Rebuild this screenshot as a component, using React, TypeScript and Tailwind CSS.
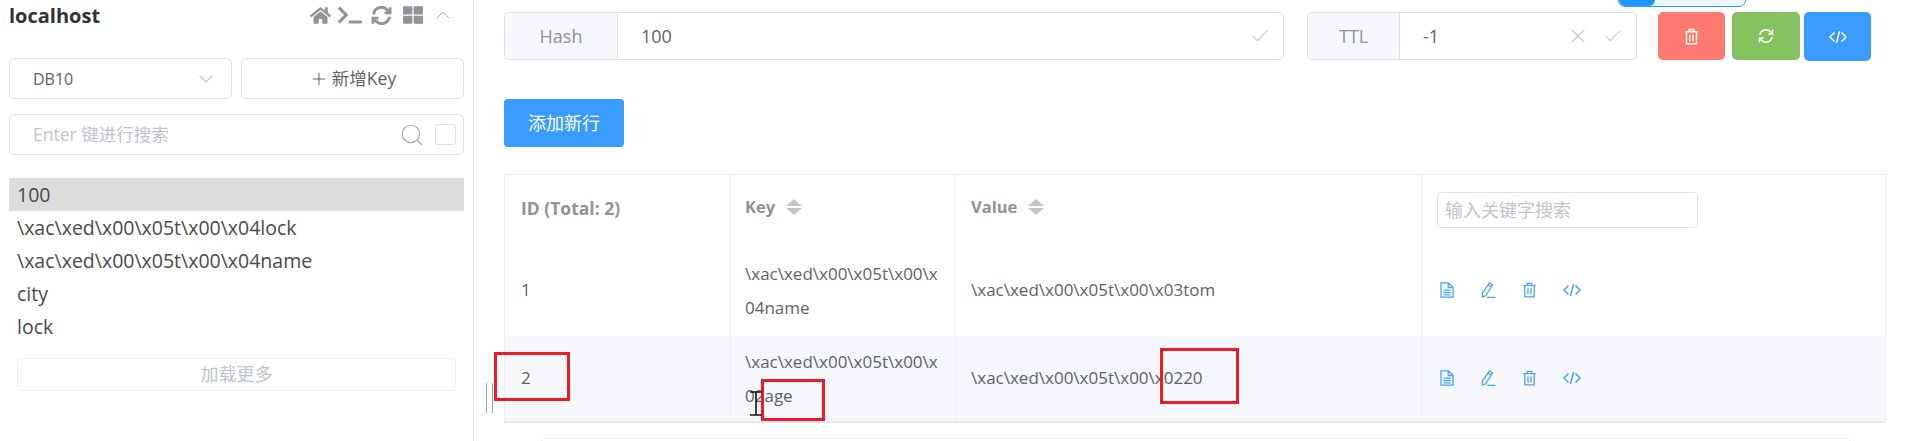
import { Check, ChevronDown, ChevronUp, Plus, Search, X } from 'lucide-react';
import { FaHome, FaTerminal, FaThLarge } from 'react-icons/fa';

const sidebarKeys = [
  '100',
  '\\xac\\xed\\x00\\x05t\\x00\\x04lock',
  '\\xac\\xed\\x00\\x05t\\x00\\x04name',
  'city',
  'lock',
];

const rows = [
  { id: 1, key: '\\xac\\xed\\x00\\x05t\\x00\\x04name', value: '\\xac\\xed\\x00\\x05t\\x00\\x03tom' },
  { id: 2, key: '\\xac\\xed\\x00\\x05t\\x00\\x02age', value: '\\xac\\xed\\x00\\x05t\\x00\\x0220' },
];

type IconProps = { className?: string };

function TrashIcon({ className }: IconProps) {
  return (
    <svg viewBox="0 0 16 18" fill="none" stroke="currentColor" strokeWidth="1.5" className={className}>
      <path d="M1 4h14M5.5 4V1.5h5V4M2.7 4v12.8h10.6V4M6.3 7v7M9.7 7v7" />
    </svg>
  );
}

function CodeIcon({ className }: IconProps) {
  return (
    <svg viewBox="0 0 18 14" fill="none" stroke="currentColor" strokeWidth="1.5" className={className}>
      <path d="M5.5 2.5 1 7l4.5 4.5M12.500 2.500 17 7l-4.500 4.500M10.500 1 7.500 13" />
    </svg>
  );
}

function RefreshIcon({ className, strokeWidth = 1.6 }: IconProps & { strokeWidth?: number }) {
  return (
    <svg viewBox="0 0 16 16" fill="none" stroke="currentColor" strokeWidth={strokeWidth} className={className}>
      <path d="M2 7a6 6 0 0 1 10.400-3.200L14 5.500M14 9a6 6 0 0 1-10.400 3.200L2 10.500" />
      <path d="M14.500 1.800v4.200h-4.200M1.500 14.200V10h4.200" />
    </svg>
  );
}

function DocIcon({ className }: IconProps) {
  return (
    <svg viewBox="0 0 14 16" fill="none" stroke="currentColor" strokeWidth="1.300" className={className}>
      <path d="M1 .8h7.500L13 5.200v10H1zM8.200 .8v4.700H13M3.500 8.200h7M3.500 10.500h7M3.500 12.800h7" />
    </svg>
  );
}

function PenIcon({ className }: IconProps) {
  return (
    <svg viewBox="0 0 16 16" fill="none" stroke="currentColor" strokeWidth="1.300" className={className}>
      <path d="M9.500 1 12.500 3 6 13.500 2.500 15 2.300 11.300zM8.300 3l3 2M7 15.300h8.500" />
    </svg>
  );
}

function RowActions() {
  return (
    <div className="flex items-center gap-[26px] pl-[18px] text-[#4ba3f7]">
      <DocIcon className="h-[16px] w-[14px]" />
      <PenIcon className="h-[16px] w-[16px]" />
      <TrashIcon className="h-[16px] w-[15px]" />
      <CodeIcon className="h-[14px] w-[18px]" />
    </div>
  );
}

function SortCaret() {
  return (
    <span className="ml-[11px] flex flex-col gap-[2px]">
      <span className="h-0 w-0 border-x-[8px] border-b-[7px] border-x-transparent border-b-[#c0c4cc]" />
      <span className="h-0 w-0 border-x-[8px] border-t-[7px] border-x-transparent border-t-[#c0c4cc]" />
    </span>
  );
}

export default function App() {
  return (
    <div className="relative flex h-[441px] w-[1912px] overflow-hidden bg-white font-['Open_Sans','Noto_Sans_CJK_SC',sans-serif] text-[#606266]">
      <aside className="h-full w-[474px] shrink-0 border-r border-[#e4e7ed] pl-[9px] pr-[9px]">
        <div className="flex h-[58px] items-start justify-between pt-[1px]">
          <span className="text-[20px] font-bold leading-[30px] text-[#303133]">localhost</span>
          <div className="mr-[9px] mt-[2px] flex items-center text-[#909399]">
            <FaHome className="h-[21px] w-[21px]" />
            <FaTerminal className="ml-[7px] h-[20px] w-[24px]" />
            <RefreshIcon className="ml-[9px] h-[21px] w-[21px]" strokeWidth={2.2} />
            <FaThLarge className="ml-[11px] h-[20px] w-[20px]" />
            <ChevronUp className="ml-[8px] h-[24px] w-[24px] text-[#a8abb2]" strokeWidth={1} />
          </div>
        </div>

        <div className="flex gap-[9px]">
          <div className="flex h-[41px] w-[223px] items-center justify-between rounded-[5px] border border-[#dcdfe6] pl-[23px] pr-[13px] text-[16px]">
            DB10
            <ChevronDown className="h-[24px] w-[24px] text-[#c0c4cc]" strokeWidth={1.1} />
          </div>
          <div className="flex h-[41px] w-[223px] items-center justify-center gap-[3px] rounded-[5px] border border-[#dcdfe6] text-[17.500px]">
            <Plus className="h-[20px] w-[20px]" strokeWidth={1.2} />
            新增Key
          </div>
        </div>

        <div className="mt-[15px] flex h-[41px] w-[455px] items-center rounded-[5px] border border-[#dcdfe6] pl-[23px] pr-[7px] text-[17.500px] text-[#c0c4cc]">
          <span className="flex-1">Enter 键进行搜索</span>
          <Search className="mr-[10px] h-[26px] w-[26px] text-[#a8abb2]" strokeWidth={1.1} />
          <span className="h-[21px] w-[21px] rounded-[3px] border border-[#dcdfe6]" />
        </div>

        <ul className="mt-[23px] w-[455px] text-[19.500px] leading-[33px] text-[#4a4a4a]">
          {sidebarKeys.map((key, i) => (
            <li key={key} className={`h-[33px] pl-[8px] ${i === 0 ? 'bg-[#dcdcdc]' : ''}`}>
              {key}
            </li>
          ))}
        </ul>

        <div className="ml-[8px] mt-[15px] flex h-[33px] w-[439px] items-center justify-center rounded-[4px] border border-[#ebeef5] text-[18px] text-[#c0c4cc]">
          加载更多
        </div>
      </aside>

      <main className="min-w-0 flex-1 pl-[30px] pt-[12px]">
        <div className="flex items-start">
          <div className="flex h-[48px] w-[780px] rounded-[5px] border border-[#dcdfe6] text-[18px]">
            <div className="flex w-[113px] items-center justify-center rounded-l-[5px] border-r border-[#dcdfe6] bg-[#f5f7fa] text-[#909399]">
              Hash
            </div>
            <div className="flex flex-1 items-center justify-between pl-[23px] pr-[12px]">
              100
              <Check className="h-[22px] w-[22px] text-[#c0c4cc]" strokeWidth={1.1} />
            </div>
          </div>

          <div className="ml-[23px] flex h-[48px] w-[330px] rounded-[5px] border border-[#dcdfe6] text-[18px]">
            <div className="flex w-[92px] items-center justify-center rounded-l-[5px] border-r border-[#dcdfe6] bg-[#f5f7fa] text-[#909399]">
              TTL
            </div>
            <div className="flex flex-1 items-center pl-[23px] pr-[12px]">
              <span className="flex-1">-1</span>
              <X className="mr-[12px] h-[24px] w-[24px] text-[#c0c4cc]" strokeWidth={1.1} />
              <Check className="h-[22px] w-[22px] text-[#c0c4cc]" strokeWidth={1.1} />
            </div>
          </div>

          <div className="ml-[21px] flex items-start gap-[4px] text-white">
            <button className="flex h-[48px] w-[67px] items-center justify-center rounded-[5px] bg-[#fe7a6e]">
              <TrashIcon className="h-[17px] w-[15px]" />
            </button>
            <button className="ml-[3px] flex h-[48px] w-[68px] items-center justify-center rounded-[5px] bg-[#85c15f]">
              <RefreshIcon className="h-[16px] w-[16px]" />
            </button>
            <button className="flex h-[49px] w-[67px] items-center justify-center rounded-[5px] bg-[#3a9bff]">
              <CodeIcon className="h-[14px] w-[18px]" />
            </button>
          </div>
        </div>

        <button className="mt-[38px] block h-[48px] w-[120px] rounded-[4px] bg-[#3a9bff] text-[18px] text-white">添加新行</button>

        <div className="mt-[27px] w-[1382px] border-l border-r border-t border-[#ebeef5] text-[17px]">
          <div className="grid h-[71px] grid-cols-[225px_225px_466px_1fr] font-bold text-[#909399]">
            <div className="flex items-center pb-[4px] pl-[16px] text-[17.500px]">ID (Total: 2)</div>
            <div className="flex items-center border-l border-[#ebeef5] pb-[7px] pl-[14px] text-[16.500px]">
              Key
              <SortCaret />
            </div>
            <div className="flex items-center border-l border-[#ebeef5] pb-[7px] pl-[15px] text-[16.500px]">
              Value
              <SortCaret />
            </div>
            <div className="border-l border-[#ebeef5] pl-[15px] pt-[17px]">
              <div className="flex h-[36px] w-[261px] items-center rounded-[4px] border border-[#dcdfe6] pl-[7px] text-[18px] font-normal text-[#c0c4cc]">
                输入关键字搜索
              </div>
            </div>
          </div>

          {rows.map((row, i) => (
            <div
              key={row.id}
              className={`grid grid-cols-[225px_225px_466px_1fr] ${i === 1 ? 'h-[87px] border-b-2 border-[#e9e9f6] bg-[#f5f7fa]' : 'h-[90px]'}`}
            >
              <div className="flex items-center pb-[2px] pl-[16px]">{row.id}</div>
              <div className="flex items-center border-l border-[#ebeef5] pl-[14px] pr-[14px] leading-[34px] break-all">{row.key}</div>
              <div className="flex items-center border-l border-[#ebeef5] pb-[2px] pl-[15px]">{row.value}</div>
              <div className="flex items-center border-l border-[#ebeef5] pb-[2px]">
                <RowActions />
              </div>
            </div>
          ))}
        </div>

        <div className="ml-[36px] mt-[15px] h-[40px] w-[1311px] rounded-[5px] border border-[#ebeef5]" />
      </main>

      {/* popup edge poking in from above */}
      <div className="absolute left-[1618px] top-[-10px] h-[17px] w-[128px] overflow-hidden rounded-[7px] border border-[#2f9bff] bg-[#eef6ff]">
        <div className="h-full w-[36px] rounded-r-[6px] bg-[#1f97ff]" />
      </div>

      {/* annotations from the screenshot tool */}
      <div className="absolute left-[494px] top-[352px] h-[49px] w-[76px] border-[3px] border-[#ed1c24]" />
      <div className="absolute left-[761px] top-[379px] h-[42px] w-[64px] border-[3px] border-[#ed1c24]" />
      <div className="absolute left-[1160px] top-[348px] h-[56px] w-[79px] border-[3px] border-[#ed1c24]" />

      <div className="absolute left-[486px] top-[383px] h-[30px] w-[7px] border-x border-[#a9a9a9]" />

      <svg className="absolute left-[749px] top-[391px] h-[25px] w-[14px]" viewBox="0 0 14 25" fill="none" stroke="#111" strokeWidth="1.600">
        <path d="M1 1h12M7 1v23M1 24h12" />
      </svg>
    </div>
  );
}
